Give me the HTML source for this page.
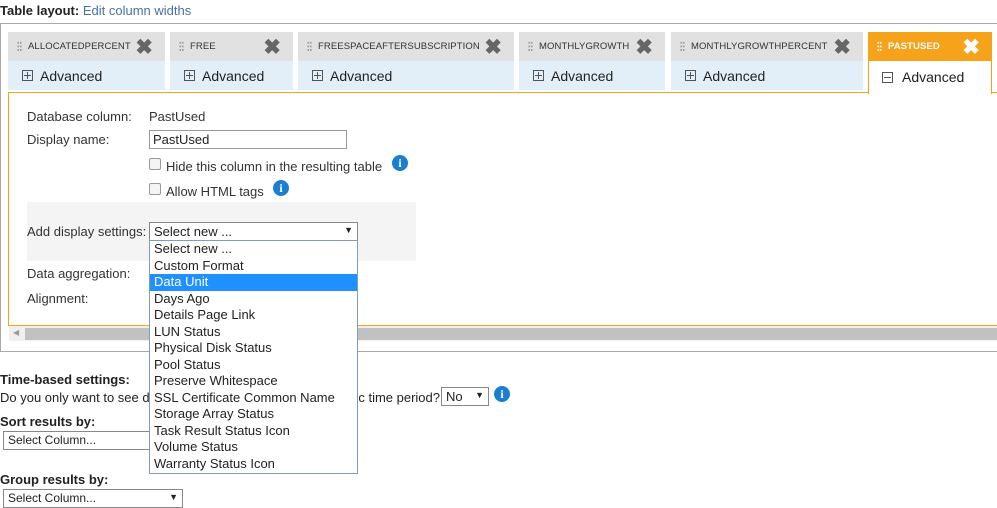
<!DOCTYPE html>
<html><head><meta charset="utf-8"><style>
*{box-sizing:border-box}
body{margin:0;width:997px;height:498px;overflow:hidden;background:#fff;font-family:"Liberation Sans",Arial,sans-serif;font-size:13px;color:#222;position:relative}
.a{position:absolute;white-space:nowrap}
.hdr{position:absolute;top:32px;height:29px;background:#e1e1e1}
.hdr .t{position:absolute;left:20px;top:9px;font-size:9.5px;color:#333;letter-spacing:.1px}
.hdr .g{position:absolute;left:9px;top:9px;width:5px;height:11px;background:radial-gradient(circle,#999 0.8px,transparent 1.1px) 0 0/2.5px 3.6px}
.hdr .x{position:absolute;right:12px;top:3px;font-size:21px;font-weight:bold;color:#666}
.adv{position:absolute;top:61px;height:29px;background:#e3eff8;font-size:14px}
.adv span{position:absolute;left:32px;top:7px}
.pb{position:absolute;left:14px;top:9px;width:11px;height:11px;border:1px solid #555}
.pb:before{content:"";position:absolute;left:1px;top:4px;width:7px;height:1px;background:#555}
.pb.p:after{content:"";position:absolute;left:4px;top:1px;width:1px;height:7px;background:#555}
.cb{position:absolute;width:12px;height:12px;border:1px solid #999;border-radius:2px;background:#f4f4f4}
.info{position:absolute;width:16px;height:16px;border-radius:50%;background:#1a7fd0;color:#fff;font-weight:bold;font-size:12px;text-align:center;line-height:16px;font-family:"Liberation Serif",serif}
.sel{position:absolute;border:1px solid #888;background:#fff;height:19px;padding:1px 4px;font-size:13px}
.sel:after{content:"▼";position:absolute;right:4px;top:2px;font-size:9px}
.li{height:16.5px;line-height:16.5px;padding-left:4px;font-size:13px}
</style></head><body>
<div class="a" style="left:0;top:3px;font-weight:bold">Table layout: <span style="font-weight:normal;color:#4a6fa5">Edit column widths</span></div>
<div class="a" style="left:0;top:23px;width:1000px;height:329px;border:1px solid #aaa;border-right:none"></div>

<div class="hdr" style="left:8px;width:157px"><div class="g"></div><div class="t">ALLOCATEDPERCENT</div><div class="x">✖</div></div>
<div class="adv" style="left:8px;width:157px"><div class="pb p"></div><span>Advanced</span></div>
<div class="hdr" style="left:170px;width:123px"><div class="g"></div><div class="t">FREE</div><div class="x">✖</div></div>
<div class="adv" style="left:170px;width:123px"><div class="pb p"></div><span>Advanced</span></div>
<div class="hdr" style="left:298px;width:216px"><div class="g"></div><div class="t">FREESPACEAFTERSUBSCRIPTION</div><div class="x">✖</div></div>
<div class="adv" style="left:298px;width:216px"><div class="pb p"></div><span>Advanced</span></div>
<div class="hdr" style="left:519px;width:146px"><div class="g"></div><div class="t">MONTHLYGROWTH</div><div class="x">✖</div></div>
<div class="adv" style="left:519px;width:146px"><div class="pb p"></div><span>Advanced</span></div>
<div class="hdr" style="left:671px;width:192px"><div class="g"></div><div class="t">MONTHLYGROWTHPERCENT</div><div class="x">✖</div></div>
<div class="adv" style="left:671px;width:192px"><div class="pb p"></div><span>Advanced</span></div>

<div class="a" style="left:8px;top:92px;width:995px;height:234px;border:1px solid #f7a21b"></div>
<div class="hdr" style="left:868px;width:124px;background:#f7a21b"><div class="g" style="background:radial-gradient(circle,#fff 0.8px,transparent 1.1px) 0 0/2.5px 3.6px"></div><div class="t" style="color:#fff;font-weight:bold">PASTUSED</div><div class="x" style="color:#fff">✖</div></div>
<div class="adv" style="left:868px;width:124px;height:33px;background:#fff;border:1px solid #f7a21b;border-top:none;border-bottom:none"><div class="pb" style="top:11px;left:13px"></div><span style="top:8px;left:33px">Advanced</span></div>

<div class="a" style="left:27px;top:109px;color:#333">Database column:</div>
<div class="a" style="left:149px;top:109px;color:#333">PastUsed</div>
<div class="a" style="left:27px;top:132px;color:#333">Display name:</div>
<div class="a" style="left:149px;top:130px;width:198px;height:19px;border:1px solid #999;padding:1px 3px">PastUsed</div>
<div class="cb" style="left:149px;top:158px"></div><div class="a" style="left:166px;top:159px;color:#333">Hide this column in the resulting table</div><div class="info" style="left:392px;top:155px">i</div>
<div class="cb" style="left:149px;top:183px"></div><div class="a" style="left:166px;top:184px;color:#333">Allow HTML tags</div><div class="info" style="left:273px;top:180px">i</div>
<div class="a" style="left:27px;top:202px;width:389px;height:59px;background:#f4f4f4"></div>
<div class="a" style="left:27px;top:224px;color:#333">Add display settings:</div>
<div class="sel" style="left:149px;top:222px;width:209px">Select new ...</div>
<div class="a" style="left:27px;top:266px;color:#333">Data aggregation:</div>
<div class="a" style="left:27px;top:291px;color:#333">Alignment:</div>

<div class="a" style="left:9px;top:326px;width:990px;height:15px;background:#f0f0f0"></div>
<div class="a" style="left:25px;top:328px;width:975px;height:12px;background:#c1c1c1"></div>
<div class="a" style="left:13px;top:328px;font-size:8px;color:#999">◀</div>

<div class="a" style="left:0;top:372px;font-weight:bold">Time-based settings:</div>
<div class="a" style="left:0;top:390px">Do you only want to see d</div>
<div class="a" style="right:557px;top:390px">ic time period?</div>
<div class="sel" style="left:441px;top:387px;width:48px">No</div>
<div class="info" style="left:494px;top:386px">i</div>
<div class="a" style="left:0;top:414px;font-weight:bold">Sort results by:</div>
<div class="sel" style="left:3px;top:431px;width:180px;font-size:12px">Select Column...</div>
<div class="a" style="left:0;top:472px;font-weight:bold">Group results by:</div>
<div class="sel" style="left:3px;top:489px;width:180px;font-size:12px">Select Column...</div>

<div class="a" style="left:149px;top:240px;width:209px;height:234px;border:1px solid #7f9db9;background:#fff;padding-top:0">
<div class="li">Select new ...</div><div class="li">Custom Format</div><div class="li" style="background:#1e90ff;color:#fff">Data Unit</div><div class="li">Days Ago</div><div class="li">Details Page Link</div><div class="li">LUN Status</div><div class="li">Physical Disk Status</div><div class="li">Pool Status</div><div class="li">Preserve Whitespace</div><div class="li">SSL Certificate Common Name</div><div class="li">Storage Array Status</div><div class="li">Task Result Status Icon</div><div class="li">Volume Status</div><div class="li">Warranty Status Icon</div>
</div>
</body></html>
